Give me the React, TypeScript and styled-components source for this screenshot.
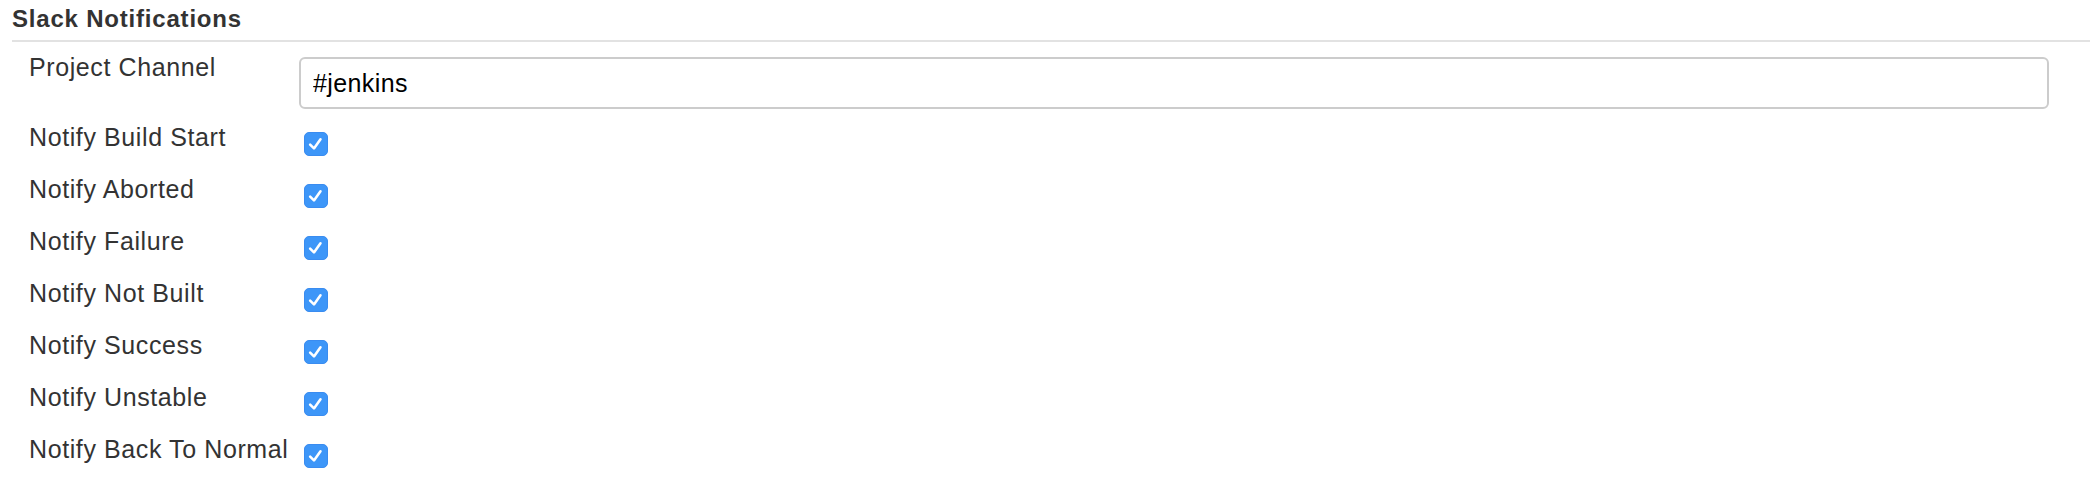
import React from 'react';
import styled, { createGlobalStyle } from 'styled-components';

const GlobalStyle = createGlobalStyle`
  html, body {
    margin: 0;
    padding: 0;
    background: #ffffff;
  }
  body {
    font-family: "Liberation Sans", Arial, Helvetica, sans-serif;
    color: #333333;
  }
`;

const Section = styled.section`
  width: 100%;
`;

const SectionHeader = styled.div`
  margin-left: 12px;
  padding: 4px 0 6px 0;
  font-size: 24px;
  line-height: 30px;
  font-weight: 700;
  letter-spacing: 0.8px;
  color: #333333;
  border-bottom: 2px solid #e2e2e2;
`;

const Form = styled.div`
  margin-top: 2px;
  padding-left: 29px;
  padding-right: 41px;
`;

const Row = styled.div<{ $tall?: boolean }>`
  display: grid;
  grid-template-columns: 270px 1fr;
  align-items: start;
  min-height: ${p => (p.$tall ? '78px' : '52px')};
`;

const Label = styled.div<{ $pad?: number }>`
  padding-top: ${p => p.$pad ?? 0}px;
  font-size: 25px;
  line-height: 30px;
  letter-spacing: 0.6px;
  color: #333333;
  white-space: nowrap;
`;

const Control = styled.div<{ $pad: number }>`
  padding-top: ${p => p.$pad}px;
  display: flex;
`;

const TextInput = styled.input`
  box-sizing: border-box;
  width: 100%;
  height: 52px;
  padding: 0 12px;
  border: 2px solid #cccccc;
  border-radius: 6px;
  font-family: "Liberation Sans", Arial, Helvetica, sans-serif;
  font-size: 25px;
  letter-spacing: 0.4px;
  color: #000000;
  background: #ffffff;
  outline: none;
`;

const Box = styled.span`
  box-sizing: border-box;
  display: inline-flex;
  align-items: center;
  justify-content: center;
  width: 24px;
  height: 24px;
  margin-left: 5px;
  border-radius: 5px;
  background: #3d96f8;
  border: 1px solid #3a8cf0;
`;

const Checkbox: React.FC = () => (
  <Box role="checkbox" aria-checked="true">
    <svg width="24" height="24" viewBox="0 0 24 24">
      <path
        d="M5.6 12.6 L9.8 16.8 L16.9 6.9"
        fill="none"
        stroke="#ffffff"
        strokeWidth="2.8"
        strokeLinecap="round"
        strokeLinejoin="round"
      />
    </svg>
  </Box>
);

const options = [
  'Notify Build Start',
  'Notify Aborted',
  'Notify Failure',
  'Notify Not Built',
  'Notify Success',
  'Notify Unstable',
  'Notify Back To Normal',
];

const App: React.FC = () => (
  <>
    <GlobalStyle />
    <Section>
      <SectionHeader>Slack Notifications</SectionHeader>
      <Form>
        <Row $tall>
          <Label $pad={8}>Project Channel</Label>
          <Control $pad={13}>
            <TextInput defaultValue="#jenkins" />
          </Control>
        </Row>
        {options.map(name => (
          <Row key={name}>
            <Label>{name}</Label>
            <Control $pad={10}>
              <Checkbox />
            </Control>
          </Row>
        ))}
      </Form>
    </Section>
  </>
);

export default App;
